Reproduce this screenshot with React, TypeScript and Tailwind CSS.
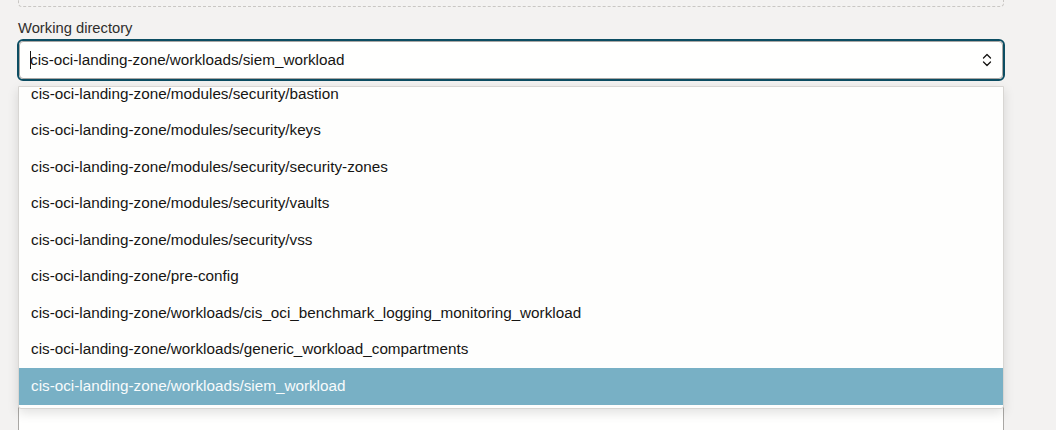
import { useState } from "react";

const directories = [
  "cis-oci-landing-zone/modules/security/bastion",
  "cis-oci-landing-zone/modules/security/keys",
  "cis-oci-landing-zone/modules/security/security-zones",
  "cis-oci-landing-zone/modules/security/vaults",
  "cis-oci-landing-zone/modules/security/vss",
  "cis-oci-landing-zone/pre-config",
  "cis-oci-landing-zone/workloads/cis_oci_benchmark_logging_monitoring_workload",
  "cis-oci-landing-zone/workloads/generic_workload_compartments",
  "cis-oci-landing-zone/workloads/siem_workload",
];

function Chevrons() {
  return (
    <svg width="12" height="16" viewBox="0 0 12 16" fill="none">
      <path
        d="M2.5 6 L6 2.5 L9.5 6"
        stroke="#161513"
        strokeWidth="1.3"
        strokeLinecap="round"
        strokeLinejoin="round"
      />
      <path
        d="M2.5 10 L6 13.5 L9.5 10"
        stroke="#161513"
        strokeWidth="1.3"
        strokeLinecap="round"
        strokeLinejoin="round"
      />
    </svg>
  );
}

function App() {
  const [selected] = useState(directories[directories.length - 1]);

  return (
    <div
      className="h-[430px] w-[1056px] overflow-hidden bg-[#f3f2f1] text-[#161513]"
      style={{ fontFamily: '"Liberation Sans", Arial, sans-serif' }}
    >
      <div className="ml-[18px] mr-[52px]">
        {/* previous section, scrolled off */}
        <div className="-mt-[40px] h-[47px] rounded-[4px] border border-dashed border-[#c9c7c4]" />

        <label className="mt-[12px] block text-[14.75px] leading-[18px] text-[#2f2e2c]">
          Working directory
        </label>

        <div className="relative mt-[2px]">
          <div className="-mx-px flex h-[42px] items-center rounded-[6px] border-2 border-[#0c4d62] bg-[#fffffe]">
            <div className="flex h-full flex-1 items-center rounded-[4px] border border-[#a9a7a4] pl-[10px] pr-[9px]">
              <span className="-mr-px h-[18px] w-px bg-[#161513]" />
              <span className="flex-1 text-[15.25px]">{selected}</span>
              <Chevrons />
            </div>
          </div>

          <div className="absolute left-0 right-0 top-[47px] z-10 h-[323px] overflow-hidden rounded-b-[3px] border border-[#d8d6d3] bg-[#fefefd] shadow-[0_4px_12px_rgba(0,0,0,0.12)]">
            <div className="-mt-[11px]">
              {directories.map((dir) => (
                <div
                  key={dir}
                  className={
                    dir === selected
                      ? "flex h-[36.5px] items-center bg-[#78b0c5] pl-[12px] text-[15.25px] text-[#f7fbfc]"
                      : "flex h-[36.5px] items-center pl-[12px] text-[15.25px] text-[#161513]"
                  }
                >
                  {dir}
                </div>
              ))}
            </div>
          </div>

          {/* next field, mostly under the open list */}
          <div className="mt-[310px] h-[200px] rounded-[6px] border border-[#a9a7a4] bg-[#fffffe]" />
        </div>
      </div>
    </div>
  );
}

export default App;
